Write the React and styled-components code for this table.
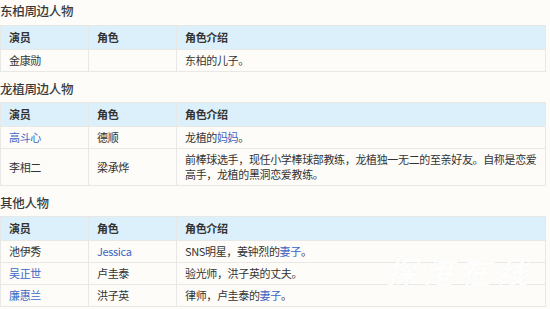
import React from 'react';
import styled, { createGlobalStyle } from 'styled-components';

const GlobalStyle = createGlobalStyle`
  html, body {
    margin: 0;
    padding: 0;
    background: #fdfcf8;
  }
  body {
    font-family: "Noto Sans CJK SC", "Noto Sans", sans-serif;
    color: #333;
  }
`

const Page = styled.div`
  position: relative;
  width: 550px;
  height: 309px;
  overflow: hidden;
  background: #fdfcf8;
`

const Heading = styled.h3`
  margin: ${p => (p.$first ? '1px 0 4px' : '7px 0 3px')};
  font-size: 12.5px;
  line-height: 20px;
  font-weight: 500;
  letter-spacing: -0.3px;
  color: #3a3a3a;
`

const Table = styled.table`
  width: 546px;
  border-collapse: collapse;
  table-layout: fixed;
  font-size: 11px;
  letter-spacing: -0.35px;
  line-height: 15px;
  background: #fdfcf8;
  border: 1px solid #e8e8e6;

  th, td {
    border: 1px solid #e8e8e6;
    padding: 3px 8px;
    text-align: left;
    vertical-align: middle;
  }
  th {
    background: #dcf0fc;
    font-weight: 700;
    color: #333;
    padding: 4px 8px;
  }
  td {
    color: #333;
  }
`

const Link = styled.span`
  color: #3b66c4;
`

const Watermark = styled.div`
  position: absolute;
  left: 386px;
  top: 248px;
  font-size: 31px;
  font-style: italic;
  font-weight: 700;
  letter-spacing: 6px;
  color: rgba(255, 255, 255, 0.95);
  text-shadow: 0 0 1px rgba(0, 0, 0, 0.05);
  pointer-events: none;
  white-space: nowrap;
`

const Head = () => (
  <thead>
    <tr>
      <th>演员</th>
      <th>角色</th>
      <th>角色介绍</th>
    </tr>
  </thead>
)

const Cols = () => (
  <colgroup>
    <col style={{ width: 88 }} />
    <col style={{ width: 88 }} />
    <col />
  </colgroup>
)

export default function App() {
  return (
    <Page>
      <GlobalStyle />
      <Heading $first>东柏周边人物</Heading>
      <Table>
        <Cols />
        <Head />
        <tbody>
          <tr>
            <td>金康勋</td>
            <td></td>
            <td>东柏的儿子。</td>
          </tr>
        </tbody>
      </Table>

      <Heading>龙植周边人物</Heading>
      <Table>
        <Cols />
        <Head />
        <tbody>
          <tr>
            <td><Link>高斗心</Link></td>
            <td>德顺</td>
            <td>龙植的<Link>妈妈</Link>。</td>
          </tr>
          <tr>
            <td>李相二</td>
            <td>梁承烨</td>
            <td>前棒球选手，现任小学棒球部教练，龙植独一无二的至亲好友。自称是恋爱高手，龙植的黑洞恋爱教练。</td>
          </tr>
        </tbody>
      </Table>

      <Heading>其他人物</Heading>
      <Table>
        <Cols />
        <Head />
        <tbody>
          <tr>
            <td>池伊秀</td>
            <td><Link>Jessica</Link></td>
            <td>SNS明星，姜钟烈的<Link>妻子</Link>。</td>
          </tr>
          <tr>
            <td><Link>吴正世</Link></td>
            <td>卢圭泰</td>
            <td>验光师，洪子英的丈夫。</td>
          </tr>
          <tr>
            <td><Link>廉惠兰</Link></td>
            <td>洪子英</td>
            <td>律师，卢圭泰的<Link>妻子</Link>。</td>
          </tr>
        </tbody>
      </Table>
      <Watermark>探港在线</Watermark>
    </Page>
  );
}
